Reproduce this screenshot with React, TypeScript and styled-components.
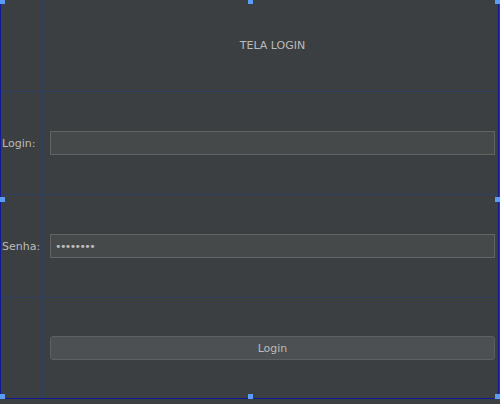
import React from "react";
import styled, { createGlobalStyle } from "styled-components";

const Global = createGlobalStyle`
  html, body { margin: 0; padding: 0; background: #3c3f41; }
  body { width: 500px; height: 404px; overflow: hidden; font-family: "DejaVu Sans", Tahoma, sans-serif; }
`;

const Frame = styled.div`
  position: relative;
  width: 497px;
  height: 398px;
  border: 1px solid #101a94;
  border-top: none;
  background: #3c3f41;
  display: grid;
  grid-template-rows: 92px 103px 103px 100px;
`;

const Row = styled.div<{ $last?: boolean }>`
  display: grid;
  grid-template-columns: 42px 1fr;
  border-bottom: ${(p) => (p.$last ? "none" : "1px solid #2f4263")};
  box-sizing: border-box;
`;

const Side = styled.div`
  border-right: 1px solid #2f4263;
  display: flex;
  align-items: center;
  padding-left: 1px;
  color: #bbbbbb;
  font-size: 11px;
  white-space: nowrap;
`;

const Main = styled.div<{ $center?: boolean }>`
  display: flex;
  align-items: center;
  justify-content: ${(p) => (p.$center ? "center" : "stretch")};
  padding: 0 3px 0 7px;
`;

const Title = styled.div`
  color: #bbbbbb;
  font-size: 11px;
`;

const Field = styled.input<{ $dots?: boolean }>`
  flex: 1;
  box-sizing: border-box;
  height: 24px;
  margin: 0;
  border: 1px solid #646464;
  background: #45494a;
  color: #bbbbbb;
  font-family: "DejaVu Sans", sans-serif;
  font-size: 11px;
  padding: 0 4px;
  outline: none;
  letter-spacing: ${(p) => (p.$dots ? "-1.6px" : "0px")};
`;

const Button = styled.button`
  flex: 1;
  box-sizing: border-box;
  height: 24px;
  margin: 0;
  border: 1px solid #5e6060;
  border-radius: 3px;
  background: #4c5052;
  color: #bbbbbb;
  font-family: "DejaVu Sans", sans-serif;
  font-size: 11px;
  padding: 0;
`;

const Handle = styled.div<{ $x: number; $y: number }>`
  position: absolute;
  width: 5px;
  height: 5px;
  background: #5b9cf6;
  left: ${(p) => p.$x}px;
  top: ${(p) => p.$y}px;
`;

export default function App() {
  return (
    <>
      <Global />
      <Frame>
        <Row>
          <Side />
          <Main $center>
            <Title>TELA LOGIN</Title>
          </Main>
        </Row>
        <Row>
          <Side>Login:</Side>
          <Main>
            <Field type="text" readOnly defaultValue="" />
          </Main>
        </Row>
        <Row>
          <Side>Senha:</Side>
          <Main>
            <Field $dots type="password" readOnly defaultValue="12345678" />
          </Main>
        </Row>
        <Row $last>
          <Side />
          <Main>
            <Button>Login</Button>
          </Main>
        </Row>
        <Handle $x={-1} $y={-1} />
        <Handle $x={247} $y={-1} />
        <Handle $x={494} $y={-1} />
        <Handle $x={-1} $y={197} />
        <Handle $x={494} $y={197} />
        <Handle $x={-1} $y={394} />
        <Handle $x={247} $y={394} />
        <Handle $x={494} $y={394} />
      </Frame>
    </>
  );
}
